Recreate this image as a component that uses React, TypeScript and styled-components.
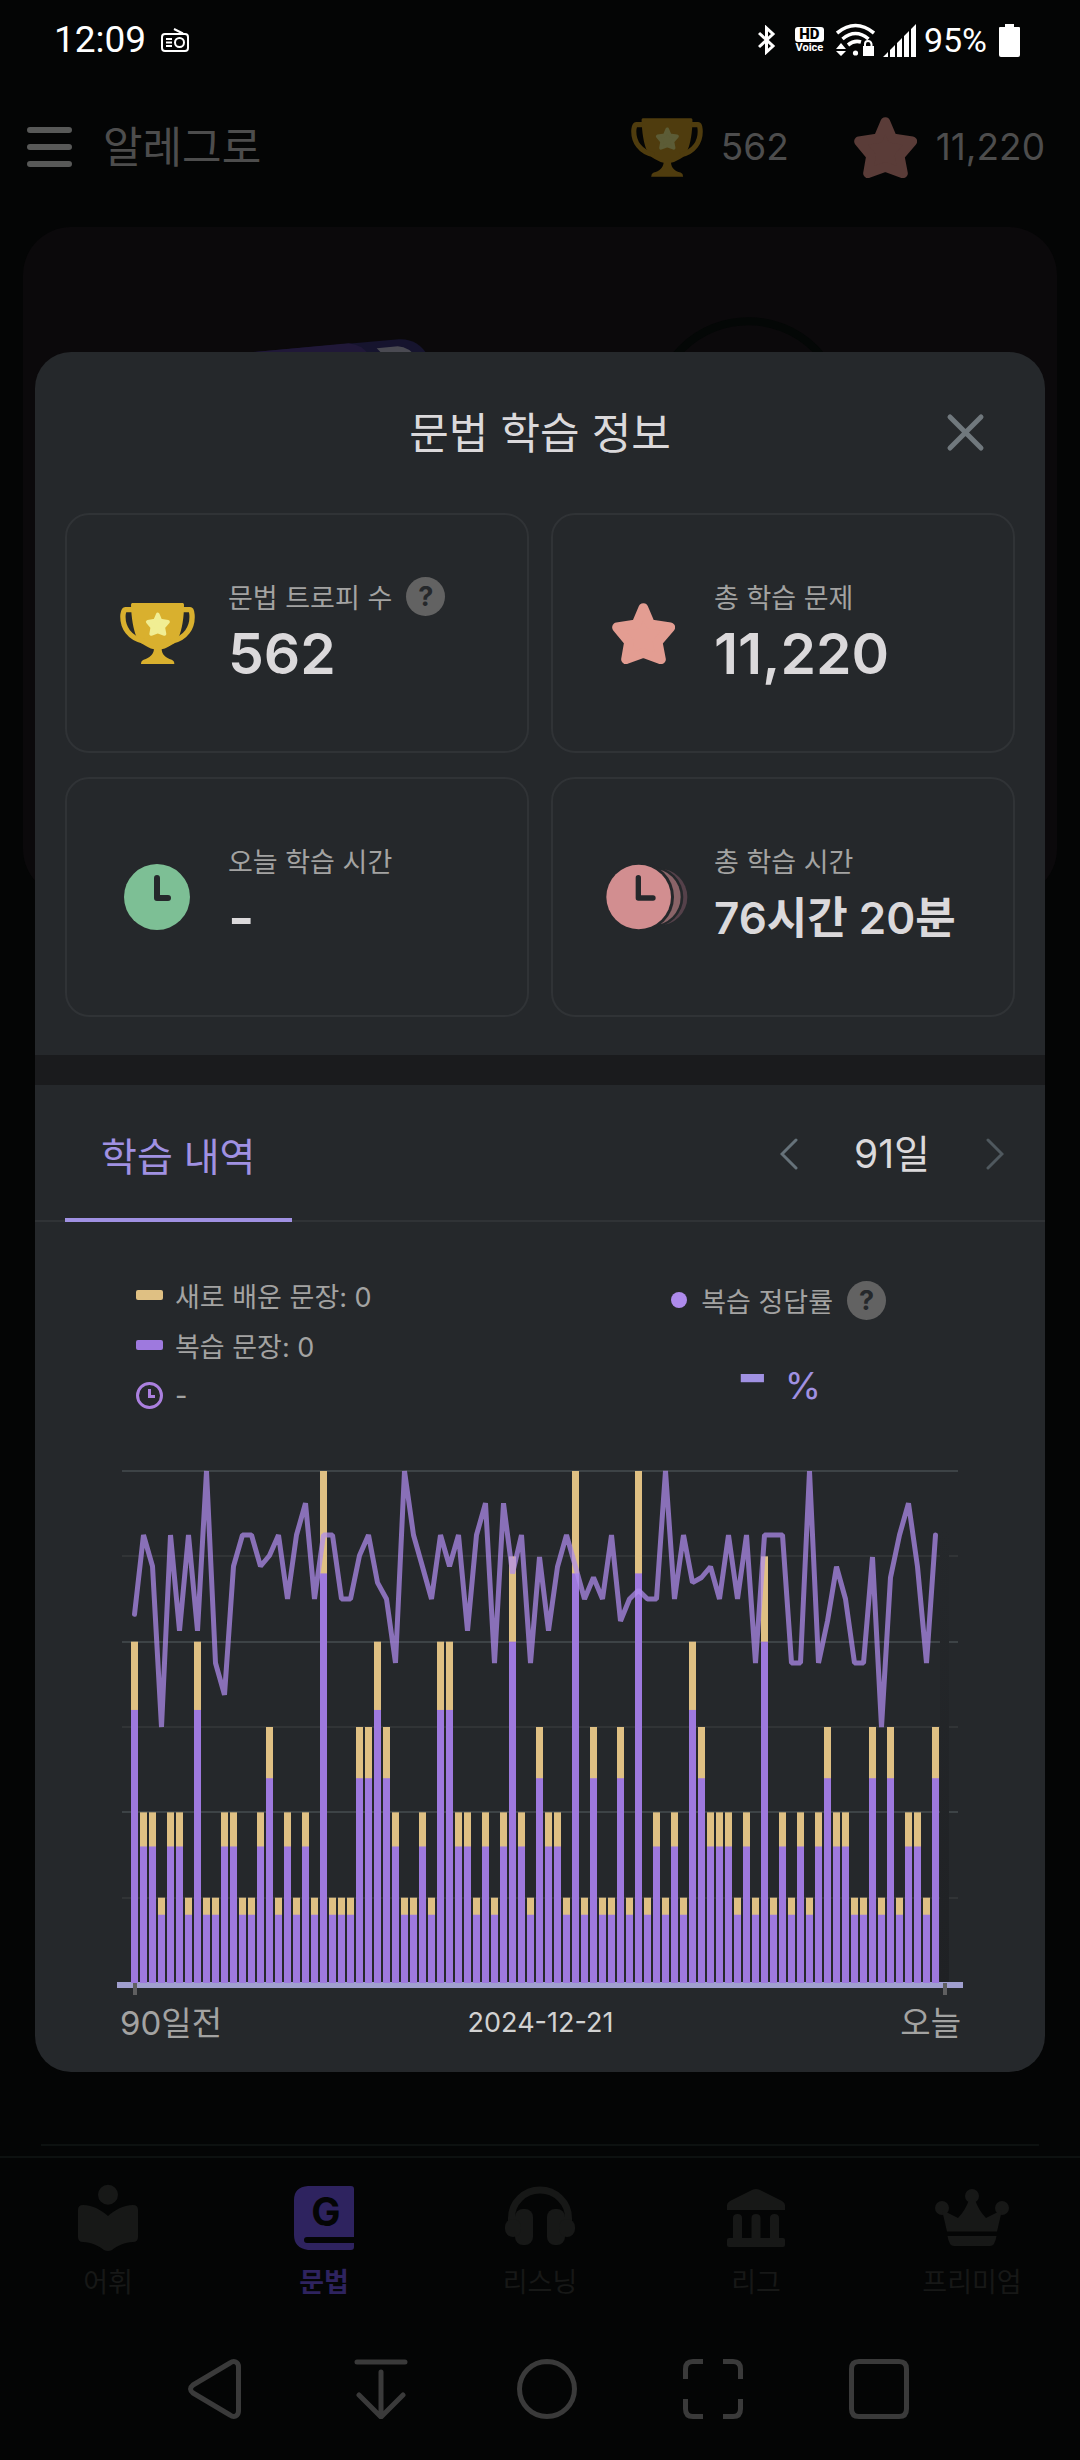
import React from "react";
import styled, { createGlobalStyle } from "styled-components";

const colors = {
  page: "#040505",
  sheet: "#25282b",
  band: "#1a1b1d",
  line: "#303336",
  text: "#dbd9db",
  muted: "#a3a3a2",
  accent: "#a091e2",
  review: "#9e79de",
  fresh: "#dfc083",
};

const GlobalStyle = createGlobalStyle`
  *, *::before, *::after { box-sizing: border-box; }
  body {
    margin: 0;
    background: ${colors.page};
    color: ${colors.text};
    font-family: Inter, "Noto Sans CJK KR", sans-serif;
  }
  button { font: inherit; color: inherit; background: none; border: 0; padding: 0; cursor: pointer; }
  svg { display: block; flex: none; }
  ul, dl, dd, h1, h2, p { margin: 0; padding: 0; list-style: none; }
`;

/* ---------- shell ---------- */

const Page = styled.div`
  display: flex;
  flex-direction: column;
  min-height: 100vh;
`;

const StatusBar = styled.header`
  display: flex;
  align-items: center;
  justify-content: space-between;
  height: 80px;
  padding: 0 60px 0 54px;
  color: #fff;
  font-family: Roboto, sans-serif;
`;

const StatusGroup = styled.div<{ $gap: number }>`
  display: flex;
  align-items: center;
  gap: ${(p) => p.$gap}px;
`;

const Clock = styled.span`
  font-size: 37px;
  line-height: 44px;
`;

const Percent = styled.span`
  font-size: 34px;
  line-height: 44px;
`;

const VoiceBadge = styled.span`
  display: flex;
  flex-direction: column;
  align-items: center;
  width: 29px;
  font-size: 11px;
  font-weight: 700;
  line-height: 12px;
`;

const HdMark = styled.b`
  width: 29px;
  border-radius: 3px;
  background: #fff;
  color: #000;
  font-size: 15px;
  line-height: 15px;
  text-align: center;
`;

const AppArea = styled.div`
  position: relative;
  display: flex;
  flex: 1;
  flex-direction: column;
`;

const AppBar = styled.div`
  display: flex;
  align-items: center;
  justify-content: space-between;
  height: 134px;
  padding: 0 35px 0 27px;
  color: #4d4d4d;
`;

const BarGroup = styled.div<{ $gap: number }>`
  display: flex;
  align-items: center;
  gap: ${(p) => p.$gap}px;
`;

const AppTitle = styled.h1`
  font-size: 43px;
  font-weight: 400;
  line-height: 60px;
`;

const Counter = styled.span`
  font-size: 37px;
  line-height: 48px;
`;

const HeroCard = styled.section`
  height: 670px;
  margin: 13px 23px 0;
  overflow: hidden;
  border-radius: 48px;
  background: #0b090b;

  svg { width: 100%; height: auto; }
`;

const Filler = styled.div`
  flex: 1;
  margin: 0 41px 10px;
  border-bottom: 2px solid #0d1110;
`;

const TabBar = styled.nav`
  display: grid;
  grid-template-columns: repeat(5, 1fr);
  height: 188px;
  padding-top: 25px;
  border-top: 2px solid #0d1110;
`;

const TabItem = styled.button<{ $active?: boolean }>`
  display: flex;
  flex-direction: column;
  align-items: center;
  gap: 12px;
  color: ${(p) => (p.$active ? "#2e235f" : "#171817")};
  font-size: 27px;
  font-weight: ${(p) => (p.$active ? 700 : 400)};
  line-height: 36px;

  svg { overflow: visible; }
`;

const SystemNav = styled.nav`
  display: flex;
  align-items: center;
  justify-content: space-between;
  height: 116px;
  padding: 0 171px 26px 185px;
  color: #3a3a3a;
`;

/* ---------- sheet ---------- */

const Overlay = styled.div`
  position: absolute;
  inset: 0;
  display: flex;
  align-items: center;
  padding: 0 35px;
`;

const Sheet = styled.section`
  width: 100%;
  overflow: hidden;
  border-radius: 36px;
  background: ${colors.sheet};
`;

const SheetHeader = styled.header`
  display: grid;
  grid-template-columns: 1fr auto 1fr;
  align-items: center;
  height: 161px;
  padding: 0 60px;
`;

const SheetTitle = styled.h2`
  grid-column: 2;
  font-size: 43px;
  font-weight: 400;
  line-height: 60px;
`;

const CloseButton = styled.button`
  justify-self: end;
  color: #70787d;
`;

const StatGrid = styled.dl`
  display: grid;
  grid-template-columns: 1fr 1fr;
  gap: 24px 22px;
  padding: 0 30px 38px;
`;

const StatCard = styled.div`
  display: grid;
  grid-template-columns: 130px 1fr;
  align-items: center;
  height: 240px;
  padding: 0 20px 0 25px;
  column-gap: 6px;
  border: 2px solid ${colors.line};
  border-radius: 24px;
`;

const StatIcon = styled.div`
  display: flex;
  justify-content: center;
`;

const StatText = styled.div`
  display: flex;
  flex-direction: column;
  gap: 8px;
  padding-bottom: 4px;
`;

const StatLabel = styled.dt`
  display: flex;
  align-items: center;
  gap: 14px;
  height: 38px;
  color: ${colors.muted};
  font-size: 27px;
`;

const StatValue = styled.dd<{ $large?: boolean }>`
  font-size: ${(p) => (p.$large ? 57 : 44)}px;
  font-weight: 600;
  line-height: 62px;
  white-space: nowrap;
`;

const HelpButton = styled.button`
  width: 39px;
  height: 39px;
  border-radius: 50%;
  background: #626262;
  color: ${colors.sheet};
  font-size: 27px;
  font-weight: 700;
  line-height: 39px;
  text-align: center;
`;

const Band = styled.div`
  height: 30px;
  background: ${colors.band};
`;

const HistoryBar = styled.div`
  display: flex;
  justify-content: space-between;
  height: 137px;
  padding: 0 41px 0 30px;
  box-shadow: inset 0 -2px ${colors.line};
`;

const HistoryTab = styled.button`
  padding: 4px 36px 0;
  border-bottom: 4px solid ${colors.accent};
  color: ${colors.accent};
  font-size: 39px;
`;

const RangePicker = styled.div`
  display: flex;
  align-items: center;
  gap: 56px;
  color: #66727a;
`;

const RangeValue = styled.span`
  color: ${colors.text};
  font-size: 39px;
  line-height: 48px;
`;

const Legend = styled.div`
  display: flex;
  justify-content: space-between;
  padding: 48px 159px 48px 101px;
  color: ${colors.muted};
  font-size: 27px;
`;

const LegendRow = styled.li`
  display: flex;
  align-items: center;
  gap: 12px;
  height: 50px;
`;

const Swatch = styled.i<{ $color: string }>`
  width: 27px;
  height: 10px;
  border-radius: 2px;
  background: ${(p) => p.$color};
`;

const Accuracy = styled.div`
  display: flex;
  flex-direction: column;
  align-items: center;
  gap: 22px;
  padding-top: 10px;
`;

const AccuracyLabel = styled.div`
  display: flex;
  align-items: center;
  gap: 14px;
  height: 40px;
`;

const Dot = styled.i`
  width: 16px;
  height: 16px;
  border-radius: 50%;
  background: #ae8bec;
`;

const AccuracyValue = styled.p`
  display: flex;
  align-items: baseline;
  gap: 16px;
  color: ${colors.accent};
  font-size: 37px;
  line-height: 64px;

  b { font-size: 70px; font-weight: 700; }
`;

const ChartBox = styled.figure`
  margin: 0;
  padding: 0 82px 24px;

  svg { width: 100%; height: auto; }
`;

const AxisLabels = styled.figcaption`
  display: grid;
  grid-template-columns: 1fr auto 1fr;
  align-items: center;
  height: 50px;
  padding: 0 2px 0 3px;
  color: ${colors.muted};
  font-size: 33px;
  line-height: 46px;

  time { color: #d2d2d2; font-size: 27px; }
  span:last-child { text-align: right; }
`;

/* ---------- drawings ---------- */

const STAR =
  "M217 138 238 187 298 196 260 240 270 292 217 273 165 292 174 240 138 196 196 187Z";

const Star = ({ color }: { color: string }) => (
  <svg width="63" height="61" viewBox="123 123 189 183" aria-hidden>
    <path d={STAR} fill={color} stroke={color} strokeWidth="29" strokeLinejoin="round" />
  </svg>
);

const Trophy = ({ cup, star, width = 75 }: { cup: string; star: string; width?: number }) => (
  <svg width={width} height="61" viewBox="27 69 225 183" aria-hidden>
    <path
      fill={cup}
      d="M64 69H215Q219 69 219 74C219 112 213 150 203 171L190 190C176 198 165 206 152 208C153 224 164 234 182 239Q190 242 190 252H90Q90 242 98 239C116 234 127 224 129 208C116 206 105 198 91 190L77 171C67 150 61 112 60 74Q60 69 64 69Z"
    />
    <path
      fill="none"
      stroke={cup}
      strokeWidth="16"
      d="M64 89H43Q38 89 36 104C33 142 56 176 100 184M216 89H237Q242 89 243 104C246 142 224 176 181 184"
    />
    <g transform="translate(140.5 133) scale(.38) translate(-217.5 -216)">
      <path d={STAR} fill={star} stroke={star} strokeWidth="29" strokeLinejoin="round" />
    </g>
  </svg>
);

const TodayClock = () => (
  <svg width="66" height="66" viewBox="42 849 198 198" aria-hidden>
    <circle cx="141" cy="948" r="99" fill="#7dbf95" />
    <path d="M141 891V951H174" fill="none" stroke={colors.sheet} strokeWidth="18" strokeLinecap="round" strokeLinejoin="round" />
  </svg>
);

const TotalClock = () => (
  <svg width="90" height="66" viewBox="83 909 270 198" aria-hidden>
    <circle cx="266" cy="1008" r="85" fill="#55414a" />
    <circle cx="248" cy="1008" r="91" fill={colors.sheet} />
    <circle cx="246" cy="1008" r="85" fill="#8a6468" />
    <circle cx="207" cy="1008" r="104" fill={colors.sheet} />
    <circle cx="205" cy="1008" r="97" fill="#d28e90" />
    <path d="M204 950V1011H248" fill="none" stroke={colors.sheet} strokeWidth="16" strokeLinecap="round" strokeLinejoin="round" />
  </svg>
);

const Chevron = ({ flip, color }: { flip?: boolean; color?: string }) => (
  <svg width="18" height="32" viewBox="0 0 18 32" aria-hidden>
    <path d={flip ? "M2 2 16 16 2 30" : "M16 2 2 16 16 30"} fill="none" stroke={color || "currentColor"} strokeWidth="3" strokeLinecap="round" />
  </svg>
);

const RadioIcon = () => (
  <svg width="28" height="24" viewBox="0 0 28 24" fill="none" stroke="#fff" strokeWidth="2" aria-hidden>
    <rect x="1" y="6" width="26" height="17" rx="3" />
    <path d="M13 1 22 5.500M5 11h6M5 14.500h6M5 18h6" />
    <circle cx="18.500" cy="14.500" r="4.500" />
  </svg>
);

const BluetoothIcon = () => (
  <svg width="25" height="30" viewBox="0 0 25 30" fill="none" stroke="#fff" strokeWidth="3" aria-hidden>
    <path d="M1 8 15 21 8.500 27V3L15 9 1 22" />
  </svg>
);

const WifiIcon = () => (
  <svg width="39" height="34" viewBox="0 0 39 34" fill="none" stroke="#fff" strokeWidth="3.600" aria-hidden>
    <path d="M1 10Q19.500-5 38 10M6.500 16Q19.500 5 32.500 16M12 22Q18 17 25 19" />
    <circle cx="19.500" cy="30" r="2.600" fill="#fff" stroke="none" />
    <path d="M5 20l5 6H0zM5 33l5-5H0zM27 23h11v10H27z" fill="#fff" stroke="none" />
    <path d="M29 24v-3q0-3 3-3t3.500 3v3" strokeWidth="2" />
  </svg>
);

const SignalIcon = () => (
  <svg width="33" height="33" viewBox="0 0 33 33" fill="#fff" aria-hidden>
    <path d="M5 33H0L5 28zM12 33H7V26L12 21zM19 33H14V19L19 14zM26 33H21V12L26 7zM33 33H28V5L33 0z" />
  </svg>
);

const BatteryIcon = () => (
  <svg width="21" height="33" viewBox="0 0 21 33" fill="#fff" aria-hidden>
    <path d="M6 0h9v3h5q1 0 1 1v27q0 2-2 2H2q-2 0-2-2V4q0-1 1-1h5z" />
  </svg>
);

const tabs = [
  {
    label: "어휘",
    icon: (
      <>
        <circle cx="35" cy="11.700" r="10" />
        <path d="M5 27Q5 22 10 22C20 22 28 27 35 33C42 27 50 22 60 22Q65 22 65 27V54Q65 59 60 59C52 59 44 63 39 67Q35 69 31 67C26 63 18 59 10 59Q5 59 5 54Z" />
      </>
    ),
  },
  {
    label: "문법",
    active: true,
    icon: (
      <>
        <path d="M19 3H62Q65 3 65 6V54H18Q15 54 15 57T18 60H65V64Q65 67 62 67H19Q5 65 5 52V17Q5 4 19 3Z" />
        <text x="37" y="43" textAnchor="middle" fontSize="39" fontWeight="700" fill={colors.page}>G</text>
      </>
    ),
  },
  {
    label: "리스닝",
    icon: (
      <>
        <path d="M6.500 42V35A28.500 28 0 0 1 63.500 35V42" fill="none" stroke="currentColor" strokeWidth="7" />
        <rect x="10" y="26" width="18" height="36" rx="8" />
        <rect x="42" y="26" width="18" height="36" rx="8" />
        <rect x="0" y="36" width="16" height="18" rx="8" />
        <rect x="54" y="36" width="16" height="18" rx="8" />
      </>
    ),
  },
  {
    label: "리그",
    icon: (
      <>
        <path d="M31 7Q35 5 39 7L61 18Q64 20 64 22V27H6V22Q6 20 9 18Z" />
        <path d="M12 56V35Q12 31 16.500 31T21 35V56ZM30.500 56V35Q30.500 31 35 31T39.500 35V56ZM49 56V35Q49 31 53.500 31T58 35V56Z" />
        <rect x="6" y="55" width="58" height="9" rx="2" />
      </>
    ),
  },
  {
    label: "프리미엄",
    icon: (
      <>
        <circle cx="5" cy="25" r="7" />
        <circle cx="35" cy="13" r="7" />
        <circle cx="65" cy="25" r="7" />
        <path d="M5 27 21 35Q28 28 32 17H38Q42 28 49 35L65 27 60 48.500H10Z" />
        <path d="M10.500 53H59.500Q58 63 53 63H17Q12 63 10.500 53Z" />
      </>
    ),
  },
];

const systemKeys = [
  { label: "뒤로", path: "M45 4C49 1 53.500 3 53.500 8V52C53.500 57 49 59 45 56L8 34Q3 30 8 26Z" },
  { label: "알림창", path: "M6 3H54M30 13V57M8 36 30 58 52 36" },
  { label: "홈", path: "M30 2.500A27.500 27.500 0 0 1 30 57.500A27.500 27.500 0 0 1 30 2.500Z" },
  { label: "캡처", butt: true, path: "M20 2.500H10Q2.500 2.500 2.500 10V20M40 2.500H50Q57.500 2.500 57.500 10V20M20 57.500H10Q2.500 57.500 2.500 50V40M40 57.500H50Q57.500 57.500 57.500 50V40" },
  { label: "최근 앱", path: "M10 2.500H50Q57.500 2.500 57.500 10V50Q57.500 57.500 50 57.500H10Q2.500 57.500 2.500 50V10Q2.500 2.500 10 2.500Z" },
];

/* ---------- chart ---------- */

// One entry per day, in fives of sentences; a fifth of each day is new material.
const dailyLoad =
  "422122141122112312121611133432112144221212521322161311316121214322212151212123221131312213"
    .split("")
    .map(Number);

// Review accuracy per day, in percent.
const accuracy = [
  72, 87.5, 81.4, 50, 87.5, 68.8, 87.5, 68.8, 100, 62.5, 56.3, 81.4, 87.5, 87.5, 81.4,
  83.5, 87.5, 75, 87.5, 93.7, 75, 87.5, 87.5, 75, 75, 83.5, 87.5, 78.2, 75, 62.5,
  100, 87.5, 81.3, 75, 87.5, 81.4, 87.5, 68.8, 87.5, 93.7, 62.5, 93.7, 80, 87.5, 62.5,
  83.2, 68.8, 81.3, 87.5, 81.3, 75, 79.2, 75, 87.5, 70.7, 75, 76.7, 75, 75, 100,
  75, 87.5, 78.2, 79.2, 81.3, 75, 87.5, 75, 87.5, 62.5, 87.5, 87.5, 87.5, 62.5, 62.5,
  100, 62.5, 70.7, 81.3, 75, 62.5, 62.5, 83.2, 50, 79.2, 87.5, 93.7, 81.3, 62.5, 87.5,
];

const BASE = 515;
const PLOT = 512;
const UNIT = PLOT / 6;

const HistoryChart = () => (
  <svg viewBox="0 0 846 530" role="img" aria-label="90일 학습 내역">
    <defs>
      <linearGradient id="today" x1="0" y1="0" x2="0" y2="1">
        <stop offset="0" stopColor={colors.sheet} />
        <stop offset="1" stopColor="#1f2124" />
      </linearGradient>
    </defs>
    {[1, 2, 3, 4, 5, 6].map((n) => (
      <rect key={n} x="5" y={Math.round(BASE - n * UNIT) - 1} width="836" height="2" fill={n % 2 ? "#313436" : "#3d4346"} />
    ))}
    <rect x="823" y="60" width="9" height="455" fill="url(#today)" />
    <rect x="0" y="514" width="846" height="6" fill="#a09fcf" />
    {dailyLoad.map((n, i) => (
      <g key={i}>
        <rect x={14 + i * 9} y={BASE - n * UNIT} width="7" height={n * UNIT} fill={colors.fresh} />
        <rect x={14 + i * 9} y={BASE - n * UNIT * 0.8} width="7" height={n * UNIT * 0.8} fill={colors.review} />
      </g>
    ))}
    <path d="M16 515h4v12h-4zM826 515h4v12h-4z" fill="#5f5f60" />
    <polyline
      points={accuracy.map((v, i) => `${17.5 + i * 9},${BASE - (v / 100) * PLOT}`).join(" ")}
      fill="none"
      stroke="#b08cee"
      strokeOpacity=".72"
      strokeWidth="5"
      strokeLinejoin="bevel"
      strokeLinecap="round"
    />
  </svg>
);

export default function App() {
  return (
    <Page>
      <GlobalStyle />
      <StatusBar>
        <StatusGroup $gap={15}>
          <Clock>12:09</Clock>
          <RadioIcon />
        </StatusGroup>
        <StatusGroup $gap={12}>
          <BluetoothIcon />
          <VoiceBadge>
            <HdMark>HD</HdMark>
            Voice
          </VoiceBadge>
          <StatusGroup $gap={8}>
            <WifiIcon />
            <SignalIcon />
            <Percent>95%</Percent>
          </StatusGroup>
          <BatteryIcon />
        </StatusGroup>
      </StatusBar>

      <AppArea>
        <AppBar>
          <BarGroup $gap={31}>
            <button aria-label="메뉴">
              <svg width="45" height="42" viewBox="0 0 45 42">
                <path d="M3 4H42M3 21H42M3 38H42" stroke="#585958" strokeWidth="6" strokeLinecap="round" />
              </svg>
            </button>
            <AppTitle>알레그로</AppTitle>
          </BarGroup>
          <BarGroup $gap={65}>
            <BarGroup $gap={18}>
              <Trophy cup="#4f3c0e" star="#5c5c36" width={72} />
              <Counter>562</Counter>
            </BarGroup>
            <BarGroup $gap={19}>
              <Star color="#5a3c38" />
              <Counter>11,220</Counter>
            </BarGroup>
          </BarGroup>
        </AppBar>
        <HeroCard>
          <svg viewBox="0 0 1032 200" aria-hidden>
            <path d="M205 127 375 112Q395 111 405 130V180H205Z" fill="#16142e" />
            <path d="M205 127 325 116Q338 117 346 128V180H205Z" fill="#201838" />
            <path d="M353 121 374 119Q386 120 392 130H362Z" fill="#4a4a52" />
            <circle cx="724" cy="188" r="94" fill="none" stroke="#040706" strokeWidth="8" />
          </svg>
        </HeroCard>
        <Filler />
        <TabBar>
          {tabs.map((t) => (
            <TabItem key={t.label} $active={t.active}>
              <svg width="70" height="70" viewBox="0 0 70 70" fill="currentColor" aria-hidden>
                {t.icon}
              </svg>
              {t.label}
            </TabItem>
          ))}
        </TabBar>

        <Overlay>
          <Sheet role="dialog" aria-labelledby="sheet-title">
            <SheetHeader>
              <SheetTitle id="sheet-title">문법 학습 정보</SheetTitle>
              <CloseButton aria-label="닫기">
                <svg width="39" height="39" viewBox="0 0 39 39">
                  <path d="M4 4 35 35M35 4 4 35" stroke="currentColor" strokeWidth="5" strokeLinecap="round" />
                </svg>
              </CloseButton>
            </SheetHeader>

            <StatGrid>
              <StatCard>
                <StatIcon><Trophy cup="#d9b02e" star="#f1ee93" /></StatIcon>
                <StatText>
                  <StatLabel>
                    문법 트로피 수
                    <HelpButton aria-label="문법 트로피 수 도움말">?</HelpButton>
                  </StatLabel>
                  <StatValue $large>562</StatValue>
                </StatText>
              </StatCard>
              <StatCard>
                <StatIcon><Star color="#e39d92" /></StatIcon>
                <StatText>
                  <StatLabel>총 학습 문제</StatLabel>
                  <StatValue $large>11,220</StatValue>
                </StatText>
              </StatCard>
              <StatCard>
                <StatIcon><TodayClock /></StatIcon>
                <StatText>
                  <StatLabel>오늘 학습 시간</StatLabel>
                  <StatValue $large>-</StatValue>
                </StatText>
              </StatCard>
              <StatCard>
                <StatIcon><TotalClock /></StatIcon>
                <StatText>
                  <StatLabel>총 학습 시간</StatLabel>
                  <StatValue>76시간 20분</StatValue>
                </StatText>
              </StatCard>
            </StatGrid>

            <Band />

            <HistoryBar>
              <HistoryTab>학습 내역</HistoryTab>
              <RangePicker>
                <button aria-label="이전 기간"><Chevron /></button>
                <RangeValue>91일</RangeValue>
                <button aria-label="다음 기간"><Chevron flip color="#4f585e" /></button>
              </RangePicker>
            </HistoryBar>

            <Legend>
              <ul>
                <LegendRow><Swatch $color={colors.fresh} />새로 배운 문장: 0</LegendRow>
                <LegendRow><Swatch $color={colors.review} />복습 문장: 0</LegendRow>
                <LegendRow>
                  <svg width="27" height="27" viewBox="0 0 27 27" fill="none" stroke="#ab80df" strokeWidth="3" aria-hidden>
                    <circle cx="13.500" cy="13.500" r="12" />
                    <path d="M13.500 7V14.500H19" />
                  </svg>
                  -
                </LegendRow>
              </ul>
              <Accuracy>
                <AccuracyLabel>
                  <Dot />
                  복습 정답률
                  <HelpButton aria-label="복습 정답률 도움말">?</HelpButton>
                </AccuracyLabel>
                <AccuracyValue><b>-</b>%</AccuracyValue>
              </Accuracy>
            </Legend>

            <ChartBox>
              <HistoryChart />
              <AxisLabels>
                <span>90일전</span>
                <time dateTime="2024-12-21">2024-12-21</time>
                <span>오늘</span>
              </AxisLabels>
            </ChartBox>
          </Sheet>
        </Overlay>
      </AppArea>

      <SystemNav>
        {systemKeys.map((k) => (
          <button key={k.label} aria-label={k.label}>
            <svg width="60" height="60" viewBox="0 0 60 60" fill="none" stroke="currentColor" strokeWidth="5" strokeLinecap={k.butt ? "butt" : "round"} strokeLinejoin="round">
              <path d={k.path} />
            </svg>
          </button>
        ))}
      </SystemNav>
    </Page>
  );
}
